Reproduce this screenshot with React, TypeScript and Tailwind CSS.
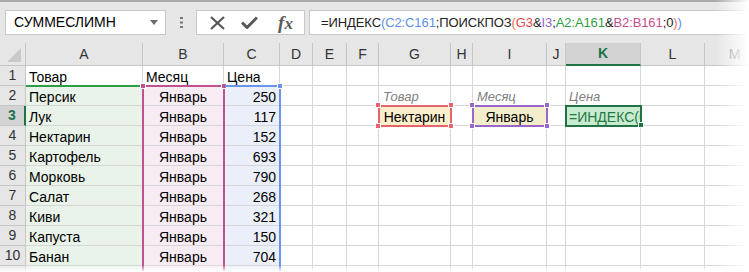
import React from 'react';

const COLS = ['A', 'B', 'C', 'D', 'E', 'F', 'G', 'H', 'I', 'J', 'K', 'L', 'M'];

const ROWS: [string, number][] = [
  ['Персик', 250],
  ['Лук', 117],
  ['Нектарин', 152],
  ['Картофель', 693],
  ['Морковь', 790],
  ['Салат', 268],
  ['Киви', 321],
  ['Капуста', 150],
  ['Банан', 704],
];

const font = "font-['Liberation_Sans',Arial,sans-serif]";

// coloured pieces of the formula, like Excel paints matching refs
const FORMULA: [string, string][] = [
  ['=ИНДЕКС', 'text-[#222]'],
  ['(', 'text-[#5b8fe8]'],
  ['C2:C161', 'text-[#5b8fe8]'],
  [';ПОИСКПОЗ', 'text-[#222]'],
  ['(', 'text-[#e8704a]'],
  ['G3', 'text-[#e6484f]'],
  ['&', 'text-[#222]'],
  ['I3', 'text-[#9c5fc9]'],
  [';', 'text-[#222]'],
  ['A2:A161', 'text-[#2f9d45]'],
  ['&', 'text-[#222]'],
  ['B2:B161', 'text-[#c9508e]'],
  [';0', 'text-[#222]'],
  [')', 'text-[#e8704a]'],
  [')', 'text-[#5b8fe8]'],
];

const Handle = ({ className }: { className: string }) => (
  <div className={`absolute w-[6px] h-[6px] border border-white ${className}`} />
);

const Cell = ({
  children,
  className = '',
}: {
  children?: React.ReactNode;
  className?: string;
}) => (
  <div
    className={`flex items-end leading-[16px] border-r border-b border-[#d6d6d6] overflow-hidden whitespace-nowrap text-[14px] text-black ${className}`}
  >
    {children}
  </div>
);

export default function App() {
  const emptyCols = (row: number) =>
    COLS.slice(3).map((c) => {
      if (row === 2 && c === 'G')
        return (
          <Cell key={c} className="italic text-[#808080]! text-[13px]! pl-[4px]">
            Товар
          </Cell>
        );
      if (row === 2 && c === 'I')
        return (
          <Cell key={c} className="italic text-[#808080]! text-[13px]! pl-[4px]">
            Месяц
          </Cell>
        );
      if (row === 2 && c === 'K')
        return (
          <Cell key={c} className="italic text-[#808080]! text-[13px]! pl-[3px]">
            Цена
          </Cell>
        );
      if (row === 3 && c === 'G')
        return (
          <Cell key={c} className="bg-[#fcefcb] justify-center">
            Нектарин
          </Cell>
        );
      if (row === 3 && c === 'I')
        return (
          <Cell key={c} className="bg-[#f3edcb] justify-center">
            Январь
          </Cell>
        );
      if (row === 3 && c === 'K')
        return (
          <Cell key={c} className="bg-[#c9ebd0] pl-[3px] text-[#1e7a42]! text-[14px]!">
            =ИНДЕКС(С
          </Cell>
        );
      return <Cell key={c} />;
    });

  return (
    <div className={`relative w-[749px] h-[272px] overflow-hidden bg-white ${font}`}>
      {/* formula bar */}
      <div className="h-[43px] bg-[#e6e6e6] border-t-2 border-[#a9a9a9] flex items-center pl-[5px]">
        <div className="w-[161px] h-[25px] bg-white border border-[#c8c8c8] flex items-center justify-between pl-[8px] pr-[7px]">
          <span className="text-[14px] text-black">СУММЕСЛИМН</span>
          <svg width="8" height="5" viewBox="0 0 8 5">
            <path d="M0 0h8L4 5z" fill="#6b6b6b" />
          </svg>
        </div>
        <div className="w-[30px] flex justify-center">
          <svg width="3" height="11" viewBox="0 0 3 11">
            <rect x="0" y="0" width="3" height="2" fill="#777" />
            <rect x="0" y="4.5" width="3" height="2" fill="#777" />
            <rect x="0" y="9" width="3" height="2" fill="#777" />
          </svg>
        </div>
        <div className="w-[109px] h-[25px] bg-white border border-[#c8c8c8] flex items-center">
          <div className="w-[40px] flex justify-center">
            <svg width="15" height="14" viewBox="0 0 15 14">
              <path d="M1 1l13 12M14 1L1 13" stroke="#575757" strokeWidth="2.2" />
            </svg>
          </div>
          <div className="w-[24px] flex justify-center">
            <svg width="17" height="13" viewBox="0 0 17 13">
              <path d="M1 6.5l5 5L16 1.5" stroke="#575757" strokeWidth="3" fill="none" />
            </svg>
          </div>
          <div className="flex-1 flex justify-center pl-[6px]">
            <span className="font-['Liberation_Serif',serif] italic font-bold text-[19px] leading-none text-[#5a5a5a]">
              f<span className="text-[17px]">x</span>
            </span>
          </div>
        </div>
        <div className="ml-[4px] flex-1 h-[25px] bg-white border border-[#c8c8c8] flex items-center pl-[11px]">
          <span className="text-[13px] tracking-[-0.1px] whitespace-nowrap">
            {FORMULA.map(([t, c], i) => (
              <span key={i} className={c}>
                {t}
              </span>
            ))}
          </span>
        </div>
      </div>

      {/* sheet */}
      <div className="relative grid grid-cols-[26px_117px_81px_56px_33px_34px_32px_72px_22px_74px_19px_75px_64px_60px] grid-rows-[23px_repeat(11,20px)]">
        {/* column header */}
        <div className="bg-[#e6e6e6] border-r border-b border-[#c6c6c6] flex items-center justify-center">
          <svg width="14" height="14" viewBox="0 0 14 14" className="ml-[2px] mt-[2px]">
            <path d="M14 0v14H0z" fill="#c9c9c9" />
          </svg>
        </div>
        {COLS.map((c) =>
          c === 'K' ? (
            <div
              key={c}
              className="bg-[#d3d3d3] border-r border-[#c6c6c6] border-b-2 border-b-[#217346] flex items-center justify-center text-[14px] font-bold text-[#217346]"
            >
              {c}
            </div>
          ) : (
            <div
              key={c}
              className={`bg-[#e6e6e6] border-r border-b border-[#c6c6c6] flex items-center justify-center text-[14px] ${
                c === 'M' ? 'text-[#888]' : 'text-[#333]'
              }`}
            >
              {c}
            </div>
          ),
        )}

        {/* row 1 */}
        <div className="bg-[#e6e6e6] border-r border-b border-[#c6c6c6] flex items-center justify-center text-[14px] text-[#333]">
          1
        </div>
        <Cell className="pl-[3px]">Товар</Cell>
        <Cell className="pl-[3px]">Месяц</Cell>
        <Cell className="pl-[3px]">Цена</Cell>
        {emptyCols(1)}

        {ROWS.map(([name, price], i) => {
          const r = i + 2;
          return (
            <React.Fragment key={r}>
              {r === 3 ? (
                <div className="bg-[#d3d3d3] border-r-2 border-r-[#217346] border-b border-[#c6c6c6] flex items-center justify-center text-[14px] font-bold text-[#217346]">
                  {r}
                </div>
              ) : (
                <div className="bg-[#e6e6e6] border-r border-b border-[#c6c6c6] flex items-center justify-center text-[14px] text-[#333]">
                  {r}
                </div>
              )}
              <Cell className="bg-[#e9f3e9] pl-[3px]">{name}</Cell>
              <Cell className="bg-[#f8ecf4] justify-center">Январь</Cell>
              <Cell className="bg-[#ebeffa] justify-end pr-[3px]">{price}</Cell>
              {emptyCols(r)}
            </React.Fragment>
          );
        })}

        {/* row 11, cut off */}
        <div className="bg-[#e6e6e6] border-r border-[#c6c6c6]" />
        <Cell className="bg-[#e9f3e9]" />
        <Cell className="bg-[#f8ecf4]" />
        <Cell className="bg-[#ebeffa]" />
        {emptyCols(11)}

        {/* range outlines */}
        <div className="absolute left-[26px] top-[42px] w-[116px] h-[2px] bg-[#2f9d45]" />
        <div className="absolute left-[142px] top-[42px] w-[83px] h-[240px] border-2 border-b-0 border-[#c0508f]" />
        <Handle className="left-[140px] top-[40px] bg-[#c0508f]" />
        <Handle className="left-[221px] top-[40px] bg-[#c0508f]" />
        <div className="absolute left-[225px] top-[42px] w-[56px] h-[240px] border-2 border-b-0 border-l-0 border-[#6a94ea]" />
        <Handle className="left-[277px] top-[40px] bg-[#6a94ea]" />

        <div className="absolute left-[378px] top-[62px] w-[74px] h-[22px] border-2 border-[#e8646a]" />
        <Handle className="left-[375px] top-[59px] bg-[#e8646a]" />
        <Handle className="left-[448px] top-[59px] bg-[#e8646a]" />
        <Handle className="left-[375px] top-[80px] bg-[#e8646a]" />
        <Handle className="left-[448px] top-[80px] bg-[#e8646a]" />

        <div className="absolute left-[472px] top-[62px] w-[76px] h-[22px] border-2 border-[#9b66cc]" />
        <Handle className="left-[469px] top-[59px] bg-[#9b66cc]" />
        <Handle className="left-[544px] top-[59px] bg-[#9b66cc]" />
        <Handle className="left-[469px] top-[80px] bg-[#9b66cc]" />
        <Handle className="left-[544px] top-[80px] bg-[#9b66cc]" />

        <div className="absolute left-[565px] top-[62px] w-[77px] h-[22px] border-2 border-[#217346]" />
        <Handle className="left-[638px] top-[79px] bg-[#217346]" />
      </div>

      {/* torn edges */}
      <div className="absolute right-0 top-0 w-[34px] h-full bg-gradient-to-r from-transparent to-white" />
      <div className="absolute left-0 bottom-0 w-full h-[7px] bg-gradient-to-b from-transparent to-white" />
    </div>
  );
}
